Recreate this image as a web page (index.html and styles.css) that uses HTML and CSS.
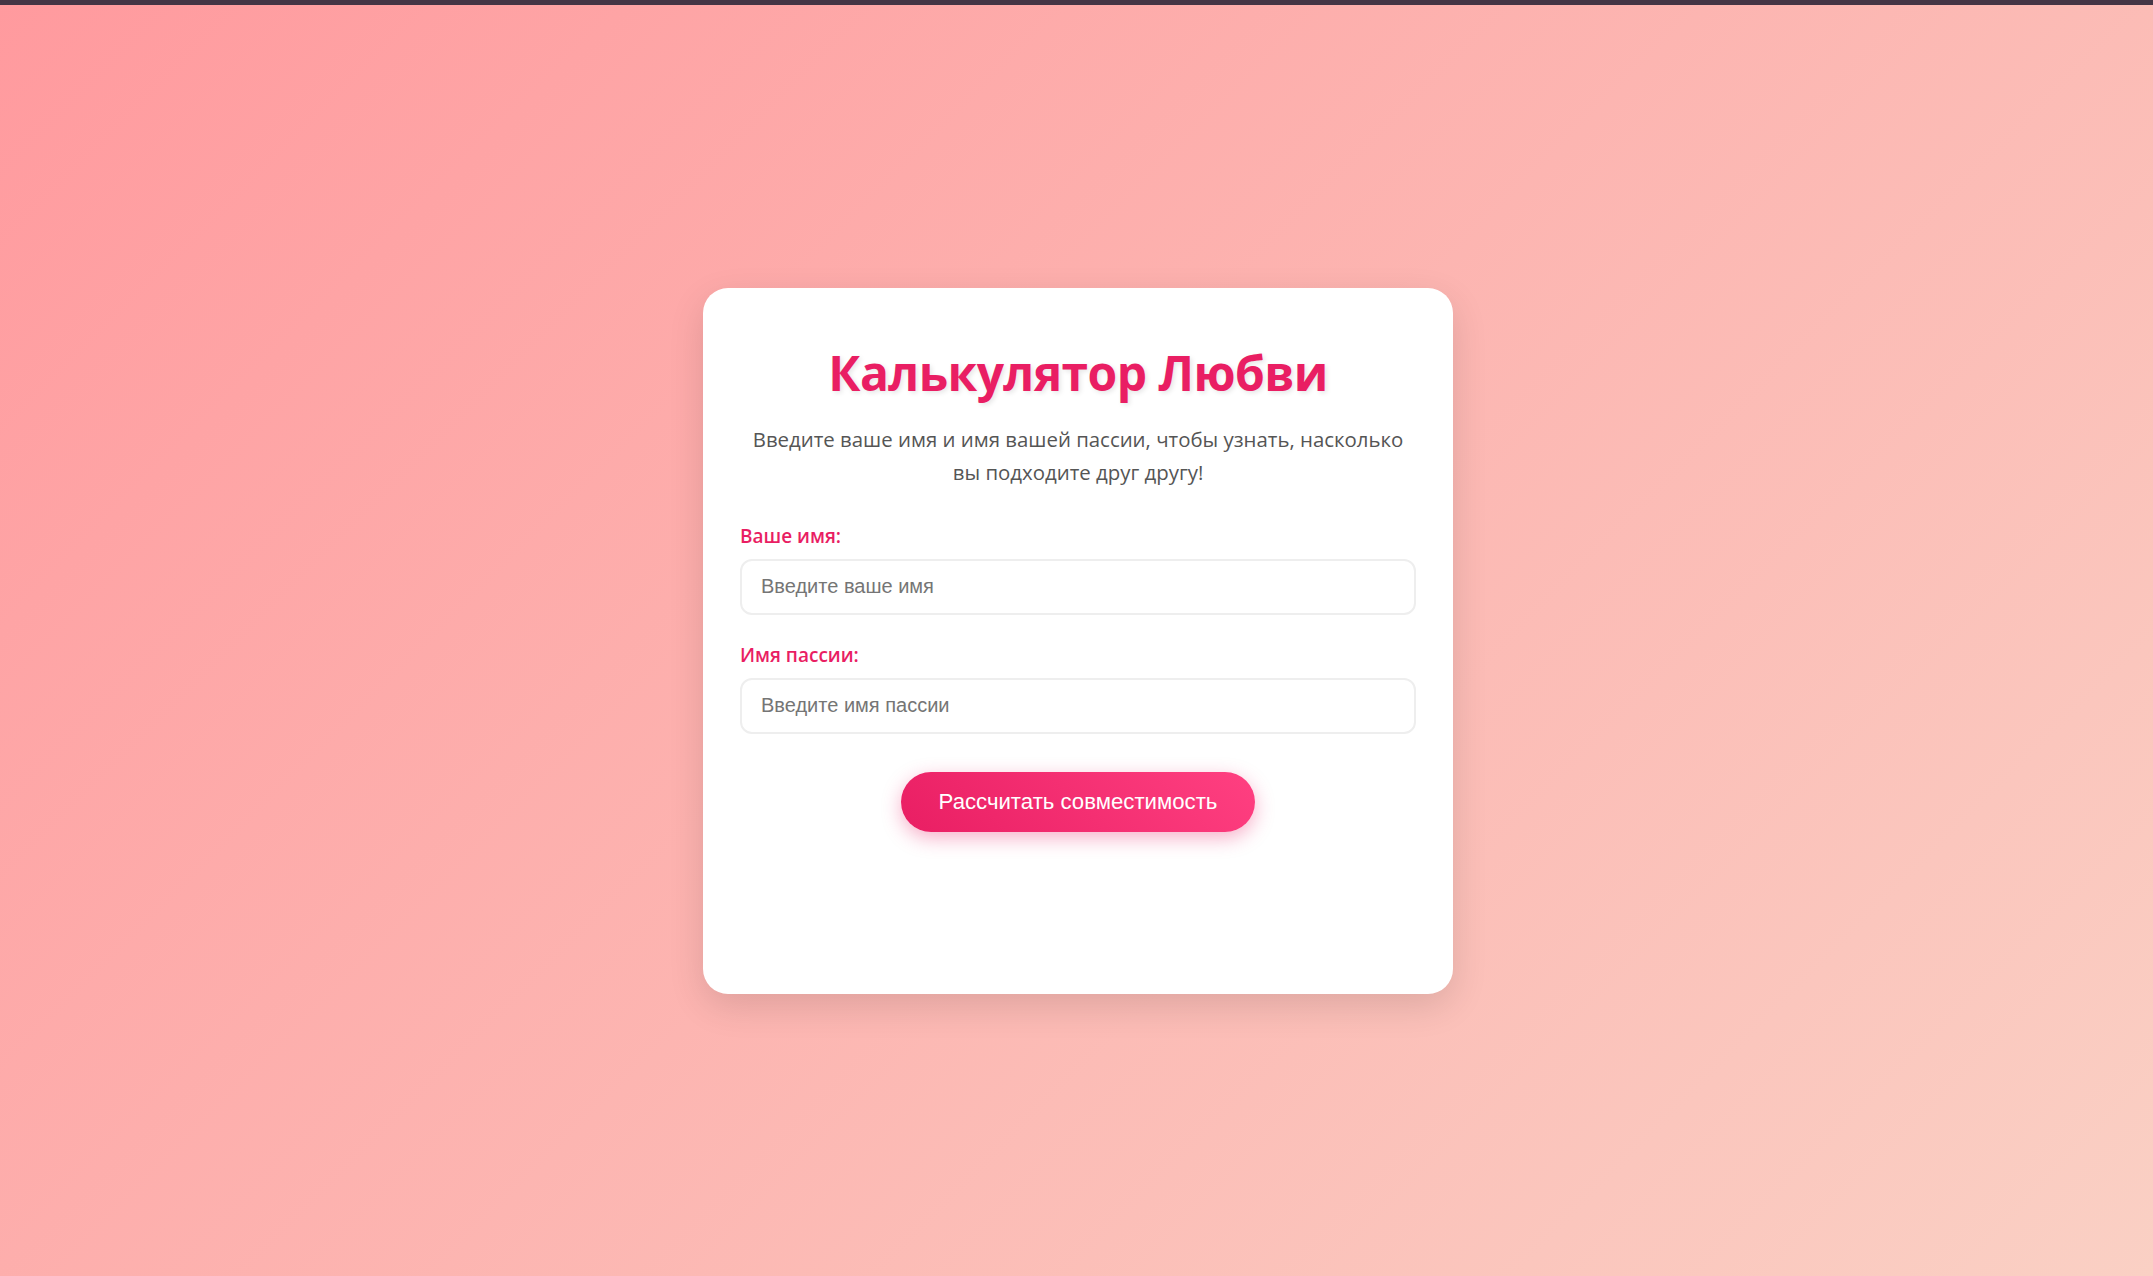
FILE: index.html
```html
<!DOCTYPE html>
<html lang="ru">
<head>
<meta charset="utf-8">
<title>Калькулятор Любви</title>
<link rel="stylesheet" href="styles.css">
</head>
<body>
<div class="topbar"></div>
<main class="page">
  <section class="card">
    <h1 class="title">Калькулятор Любви</h1>
    <p class="intro">Введите ваше имя и имя вашей пассии, чтобы узнать, насколько вы подходите друг другу!</p>
    <div class="field">
      <label class="label" for="name1">Ваше имя:</label>
      <input class="input" id="name1" type="text" placeholder="Введите ваше имя">
    </div>
    <div class="field">
      <label class="label" for="name2">Имя пассии:</label>
      <input class="input" id="name2" type="text" placeholder="Введите имя пассии">
    </div>
    <div class="actions">
      <button class="btn" type="button">Рассчитать совместимость</button>
    </div>
    <div class="result"></div>
  </section>
</main>
</body>
</html>
```
FILE: styles.css
```css
* { box-sizing: border-box; }
html, body { margin: 0; padding: 0; }
body {
  font-family: "Open Sans", "Noto Sans", "DejaVu Sans", sans-serif;
  background: linear-gradient(135deg, #ff9a9e 0%, #fad0c4 100%);
  min-height: 100vh;
  display: flex;
  flex-direction: column;
}
.topbar {
  height: 5px;
  background: #443545;
  flex: none;
}
.page {
  flex: 1;
  display: flex;
  align-items: center;
  justify-content: center;
  padding-left: 3px;
}
.card {
  width: 750px;
  height: 706px;
  background: #fff;
  border-radius: 25px;
  padding: 37px 37px;
  box-shadow: 0 12px 36px rgba(0, 0, 0, 0.12);
}
.title {
  margin: 18px 0 0;
  text-align: center;
  color: #e91e63;
  font-size: 48px;
  line-height: 60px;
  font-weight: 700;
  letter-spacing: -0.6px;
  text-shadow: 2px 2px 5px rgba(0, 0, 0, 0.1);
}
.intro {
  margin: 20px 0 0;
  text-align: center;
  color: #555;
  font-size: 20.4px;
  line-height: 33px;
}
.field { margin-top: 36px; }
.field + .field { margin-top: 29px; }
.label {
  display: block;
  color: #e91e63;
  font-weight: 600;
  font-size: 19px;
  line-height: 23px;
  margin-bottom: 11px;
}
.input {
  display: block;
  width: 100%;
  height: 56px;
  border: 2px solid #eee;
  border-radius: 12px;
  padding: 0 19px;
  font-family: "Liberation Sans", Arial, sans-serif;
  font-size: 20px;
  color: #333;
  background: #fff;
  outline: none;
}
.input::placeholder { color: #757575; }
.actions {
  margin-top: 38px;
  display: flex;
  justify-content: center;
}
.btn {
  height: 60px;
  padding: 0 38px;
  border: none;
  border-radius: 40px;
  background: linear-gradient(45deg, #e91e63, #ff4081);
  color: #fff;
  font-family: "Liberation Sans", Arial, sans-serif;
  font-size: 22.2px;
  box-shadow: 0 6px 19px rgba(233, 30, 99, 0.35);
  cursor: pointer;
}
.result { min-height: 100px; }
```
